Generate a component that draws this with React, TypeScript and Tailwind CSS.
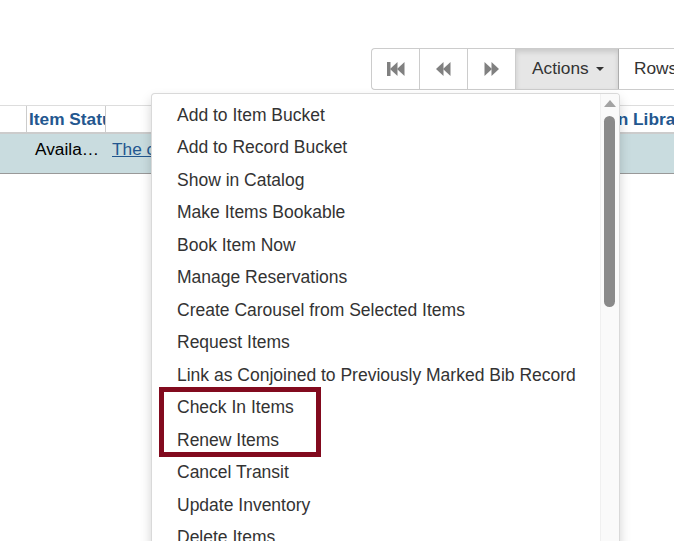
import React from "react";

const items = [
  "Add to Item Bucket",
  "Add to Record Bucket",
  "Show in Catalog",
  "Make Items Bookable",
  "Book Item Now",
  "Manage Reservations",
  "Create Carousel from Selected Items",
  "Request Items",
  "Link as Conjoined to Previously Marked Bib Record",
  "Check In Items",
  "Renew Items",
  "Cancel Transit",
  "Update Inventory",
  "Delete Items",
  "Replace Barcode",
];

function FastBack() {
  return (
    <svg width="18" height="14" viewBox="0 0 18 14" fill="#808080">
      <rect x="0" y="0" width="3.5" height="14" />
      <polygon points="3,7 10.5,0 10.5,14" />
      <polygon points="10,7 17.5,0 17.5,14" />
    </svg>
  );
}
function Back() {
  return (
    <svg width="15" height="14" viewBox="0 0 15 14" fill="#808080">
      <polygon points="0,7 7.5,0 7.5,14" />
      <polygon points="7,7 14.5,0 14.5,14" />
    </svg>
  );
}
function Fwd() {
  return (
    <svg width="15" height="14" viewBox="0 0 15 14" fill="#808080">
      <polygon points="15,7 7.5,0 7.5,14" />
      <polygon points="8,7 0.5,0 0.5,14" />
    </svg>
  );
}

export default function App() {
  return (
    <div className="relative w-[674px] h-[541px] overflow-hidden bg-white font-['Liberation_Sans',Arial,sans-serif] text-[17.3px] text-[#333]">
      <div className="flex pt-[48px] pl-[371px] whitespace-nowrap">
        <div className="flex shrink-0 h-[42px] border border-[#ccc] rounded-l-[4px] border-r-0">
          <div className="w-[48px] flex items-center justify-center border-r border-[#ccc]">
            <FastBack />
          </div>
          <div className="w-[48px] flex items-center justify-center border-r border-[#ccc]">
            <Back />
          </div>
          <div className="w-[48px] flex items-center justify-center border-r border-[#ccc]">
            <Fwd />
          </div>
          <div className="w-[103px] flex items-center pl-[16px] bg-[#e6e6e6] shadow-[inset_0_3px_5px_rgba(0,0,0,0.125)] border-r border-[#adadad]">
            <span>Actions</span>
            <span className="ml-[7px] w-0 h-0 border-l-[4px] border-r-[4px] border-t-[4px] border-l-transparent border-r-transparent border-t-[#333]" />
          </div>
          <div className="w-[80px] flex items-center pl-[15px]">Rows</div>
        </div>
      </div>

      <div className="mt-[15px] w-[674px]">
        <div className="flex h-[29px] border-t border-[#ddd] border-b-2 border-b-[#ccc] font-bold text-[#23578f] whitespace-nowrap">
          <div className="w-[27px] shrink-0 border-r border-[#ccc]" />
          <div className="w-[79px] shrink-0 border-r border-[#ccc] overflow-hidden pl-[2px] leading-[27px]">
            Item Status
          </div>
          <div className="w-[432px] shrink-0" />
          <div className="shrink-0 leading-[27px]">Circulation Library</div>
        </div>
        <div className="flex h-[40px] bg-[#c9dcdf] border-b border-[#999] whitespace-nowrap text-black">
          <div className="w-[27px] shrink-0" />
          <div className="w-[79px] shrink-0 pl-[8px] pt-[3px] overflow-hidden">Availa…</div>
          <div className="pl-[6px] pt-[3px] text-[#23578f] underline">The cat in the hat</div>
        </div>
      </div>

      <div className="absolute left-[151px] top-[93px] w-[469px] h-[470px] bg-white border border-[rgba(0,0,0,0.15)] rounded-[4px] shadow-[0_6px_12px_rgba(0,0,0,0.175)] overflow-hidden">
        <div className="pt-[4.5px] text-[17.5px]">
          {items.map((t) => (
            <div key={t} className="h-[32.5px] leading-[32.5px] pl-[25px] whitespace-nowrap text-[#333]">
              {t}
            </div>
          ))}
        </div>
        <div className="absolute right-0 top-0 bottom-0 w-[19px] bg-[#fafafa] border-l border-[#f0f0f0]">
          <div className="absolute left-[3px] top-[6px] w-0 h-0 border-l-[6px] border-r-[6px] border-b-[7px] border-l-transparent border-r-transparent border-b-[#a3a3a3]" />
          <div className="absolute left-[3px] top-[22px] w-[11px] h-[191px] rounded-full bg-[#8a8a8a]" />
        </div>
      </div>

      <div className="absolute left-[159px] top-[387px] w-[162px] h-[70px] border-[5px] border-[#820a1e]" />
    </div>
  );
}
